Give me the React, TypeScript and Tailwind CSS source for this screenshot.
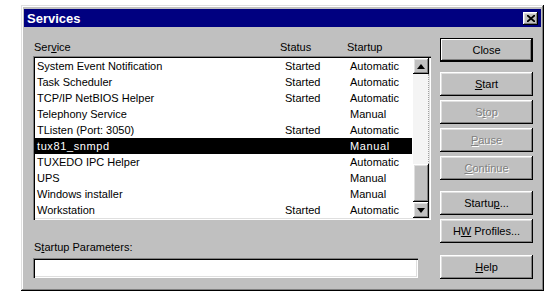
import React from 'react';

const rows = [
  { name: 'System Event Notification', status: 'Started', startup: 'Automatic' },
  { name: 'Task Scheduler', status: 'Started', startup: 'Automatic' },
  { name: 'TCP/IP NetBIOS Helper', status: 'Started', startup: 'Automatic' },
  { name: 'Telephony Service', status: '', startup: 'Manual' },
  { name: 'TListen (Port: 3050)', status: 'Started', startup: 'Automatic' },
  { name: 'tux81_snmpd', status: '', startup: 'Manual', selected: true },
  { name: 'TUXEDO IPC Helper', status: '', startup: 'Automatic' },
  { name: 'UPS', status: '', startup: 'Manual' },
  { name: 'Windows installer', status: '', startup: 'Manual' },
  { name: 'Workstation', status: 'Started', startup: 'Automatic' },
];

const bevel =
  'shadow-[inset_-1px_-1px_#000,inset_1px_1px_#fff,inset_-2px_-2px_#808080,inset_2px_2px_#dfdfdf]';

const Button: React.FC<{ children: React.ReactNode; disabled?: boolean; def?: boolean; className?: string }> = ({
  children,
  disabled,
  def,
  className = '',
}) => (
  <div
    className={`h-[24px] w-[93px] flex items-center justify-center bg-[#c0c0c0] ${
      def
        ? 'shadow-[inset_0_0_0_1px_#000,inset_-2px_-2px_#000,inset_2px_2px_#fff,inset_-3px_-3px_#808080]'
        : bevel
    } ${disabled ? 'text-[#808080] [text-shadow:1px_1px_0_#fff]' : 'text-black'} ${className}`}
  >
    {children}
  </div>
);

const Arrow: React.FC<{ up?: boolean }> = ({ up }) => (
  <div className={`h-[16px] w-[16px] flex items-center justify-center bg-[#c0c0c0] ${bevel}`}>
    <svg width="8" height="5" viewBox="0 0 8 5">
      {up ? <polygon points="4,0 8,5 0,5" fill="#000" /> : <polygon points="0,0 8,0 4,5" fill="#000" />}
    </svg>
  </div>
);

export default function App() {
  return (
    <div
      className="w-[553px] h-[298px] bg-white pt-[5px] pl-[21px] text-[11px] text-black"
      style={{ fontFamily: '"Liberation Sans", Arial, sans-serif' }}
    >
      <div className="w-[523px] h-[286px] bg-[#c0c0c0] p-[3px] pt-[4px] shadow-[inset_-1px_-1px_#000,inset_1px_1px_#dfdfdf,inset_-2px_-2px_#808080,inset_2px_2px_#fff]">
        {/* title bar */}
        <div className="h-[18px] bg-[#000080] flex items-center justify-between pl-[3px] pr-[3px]">
          <span className="text-white font-bold text-[13px] leading-none">Services</span>
          <div className={`h-[13px] w-[15px] bg-[#c0c0c0] flex items-center justify-center ${bevel}`}>
            <svg width="8" height="7" viewBox="0 0 8 7">
              <path d="M0 0 L8 7 M8 0 L0 7" stroke="#000" strokeWidth="1.8" />
            </svg>
          </div>
        </div>

        <div className="flex pl-[9px] pt-[11px]">
          {/* left column */}
          <div className="w-[398px]">
            <div className="h-[18px] relative flex items-center">
              <span className="ml-[1px]">
                Ser<u>v</u>ice
              </span>
              <span className="absolute left-[247px]">Status</span>
              <span className="absolute left-[314px]">Startup</span>
            </div>
            <div className="h-[164px] bg-white flex p-[2px] shadow-[inset_1px_1px_#808080,inset_2px_2px_#000,inset_-1px_-1px_#fff,inset_-2px_-2px_#dfdfdf]">
              <div className="flex-1">
                {rows.map((r) => (
                  <div
                    key={r.name}
                    className={`h-[16px] flex items-center relative mr-[1px] ${
                      r.selected ? 'bg-black text-white tracking-[0.6px] font-medium' : ''
                    }`}
                  >
                    <span className="ml-[2px]">{r.name}</span>
                    <span className="absolute left-[250px]">{r.status}</span>
                    <span className="absolute left-[315px]">{r.startup}</span>
                  </div>
                ))}
              </div>
              <div className="w-[16px] flex flex-col">
                <Arrow up />
                <div className="h-[90px] bg-[#f4f4f4] border-r border-dotted border-[#a0a0a0]" />
                <div className={`flex-1 bg-[#c0c0c0] ${bevel}`} />
                <Arrow />
              </div>
            </div>
            <div className="mt-[19px] ml-[1px] h-[16px] flex items-center">
              S<u>t</u>artup Parameters:
            </div>
            <div className="mt-[3px] w-[385px] h-[20px] bg-white shadow-[inset_1px_1px_#808080,inset_2px_2px_#000,inset_-1px_-1px_#fff,inset_-2px_-2px_#dfdfdf]" />
          </div>

          {/* right column */}
          <div className="ml-[9px] flex flex-col">
            <Button def>Close</Button>
            <Button className="mt-[10px]">
              <span>
                <u>S</u>tart
              </span>
            </Button>
            <Button disabled className="mt-[4px]">
              <span>
                S<u>t</u>op
              </span>
            </Button>
            <Button disabled className="mt-[4px]">
              <span>
                <u>P</u>ause
              </span>
            </Button>
            <Button disabled className="mt-[4px]">
              <span>
                <u>C</u>ontinue
              </span>
            </Button>
            <Button className="mt-[11px]">
              <span>
                Startu<u>p</u>...
              </span>
            </Button>
            <Button className="mt-[4px]">
              <span>
                H<u>W</u> Profiles...
              </span>
            </Button>
            <Button className="mt-[12px]">
              <span>
                <u>H</u>elp
              </span>
            </Button>
          </div>
        </div>
      </div>
    </div>
  );
}
